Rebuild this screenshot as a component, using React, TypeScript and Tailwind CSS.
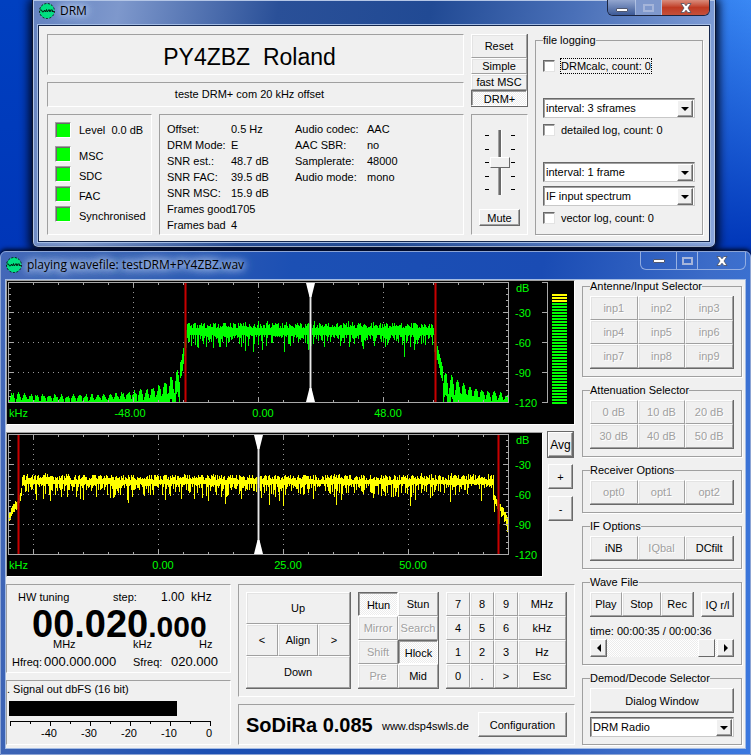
import type { ReactNode } from 'react';
import clsx from 'clsx';

const SUNKEN = 'border border-t-[#a0a0a0] border-l-[#a0a0a0] border-r-white border-b-white';
const RAISED =
  'border border-t-white border-l-white border-r-[#696969] border-b-[#696969] shadow-[inset_-1px_-1px_0_#a0a0a0]';
const CHECKER =
  'bg-[repeating-conic-gradient(#ffffff_0_25%,#ececec_0_50%)] bg-[length:2px_2px]';

type Column = [number, number, number];

function makeRandom(seed: number) {
  let s = seed;
  return () => {
    s = (s * 1664525 + 1013904223) % 4294967296;
    return s / 4294967296;
  };
}

function interpolate(points: number[][], x: number) {
  for (let i = 1; i < points.length; i++) {
    const [x0, y0] = points[i - 1];
    const [x1, y1] = points[i];
    if (x <= x1) return y0 + ((y1 - y0) * (x - x0)) / (x1 - x0);
  }
  return points[points.length - 1][1];
}

function bandColumn(x: number, rnd: () => number, solid: number): Column {
  const top = 47 - Math.floor(rnd() * 6) - (rnd() > 0.9 ? 2 : 0);
  let bottom = solid + Math.floor(rnd() * rnd() * 18);
  if (rnd() > 0.95) bottom += 5 + Math.floor(rnd() * 12);
  return [x, top, Math.min(bottom, 79)];
}

const LEFT_SKIRT = [[1, 10], [60, 8], [95, 9], [125, 12], [145, 16], [156, 20], [164, 27], [171, 35], [174, 42], [177, 60], [180, 78]];
const RIGHT_SKIRT = [[427, 68], [431, 52], [435, 36], [437, 32], [445, 28], [455, 21], [462, 17], [475, 14], [485, 12], [501, 9]];

function inputSpectrum(): Column[] {
  const rnd = makeRandom(7);
  const cols: Column[] = [];
  for (let x = 1; x < 501; x++) {
    if (x >= 180 && x < 427) {
      cols.push(bandColumn(x, rnd, 54));
      continue;
    }
    const left = x < 180;
    const h = interpolate(left ? LEFT_SKIRT : RIGHT_SKIRT, x);
    const steep = left ? x > 172 : x < 436;
    if (steep) {
      cols.push([x, 121 - Math.round(h), 121 - Math.round(h) + 13 + Math.floor(rnd() * 6)]);
      continue;
    }
    const lobe = Math.abs(Math.sin((Math.PI * (x - 2)) / 6.1));
    const height = Math.round(h * (0.25 + 0.75 * lobe) - 3 + rnd() * 3);
    if (height > 0) cols.push([x, 121 - height, Math.min(121, 121 - height + 22)]);
  }
  return cols;
}

function basebandSpectrum(): Column[] {
  const rnd = makeRandom(42);
  const cols: Column[] = [];
  for (let x = 1; x < 501; x++) {
    if (x < 15) {
      const y = Math.round(interpolate([[1, 82], [5, 72], [10, 65], [13, 58], [15, 46]], x) + rnd() * 3);
      cols.push([x, y, y + 8]);
    } else if (x > 486) {
      const y = Math.round(interpolate([[487, 61], [490, 66], [496, 75], [501, 84]], x) + rnd() * 2);
      cols.push([x, y, y + 6 + Math.floor(rnd() * rnd() * 18)]);
    } else {
      cols.push(bandColumn(x, rnd, 51));
    }
  }
  return cols;
}

const INPUT = inputSpectrum();
const BASEBAND = basebandSpectrum();

type SpectrumProps = {
  label: string;
  width: number;
  color: string;
  columns: Column[];
  grid: { x: number; text?: string }[];
  limits: number[];
  tuned: number;
  children?: ReactNode;
};

function Spectrum({ label, width, color, columns, grid, limits, tuned, children }: SpectrumProps) {
  const ticks = Array.from({ length: 19 }, (_, i) => 26 + i * 25);
  const sideTicks = Array.from({ length: 19 }, (_, i) => 7 + i * 6);
  const isMajor = (x: number) => grid.some((g) => g.x === x);
  return (
    <div className={clsx('min-w-0 flex-1 bg-black', SUNKEN)}>
      <svg
        role="img"
        aria-label={label}
        viewBox={`0 0 ${width} 143`}
        preserveAspectRatio="xMinYMin meet"
        className="block h-[143px] w-full font-['Liberation_Sans',sans-serif] text-[11px]"
        shapeRendering="crispEdges"
      >
        <g stroke="#989898" strokeDasharray="1 4">
          {[31, 61, 91].map((y) => (
            <path key={y} d={`M6 ${y}.5H500`} />
          ))}
          {grid.map((g) => (
            <path key={g.x} d={`M${g.x}.5 6V120`} />
          ))}
        </g>
        <path
          stroke={color}
          d={columns.map(([x, top, bottom]) => `M${x}.5 ${top}V${bottom}`).join('')}
        />
        <g stroke="#a8a8a8" fill="none">
          <rect x="1.5" y="1.5" width="500" height="120" />
          {ticks.map((x) => (
            <path key={x} d={isMajor(x) ? `M${x}.5 1V6M${x}.5 121V116` : `M${x}.5 1V4M${x}.5 121V119`} />
          ))}
          {sideTicks.map((y) => (
            <path key={y} d={(y - 1) % 30 === 0 ? `M1 ${y}.5H7M501 ${y}.5H496` : `M1 ${y}.5H4M501 ${y}.5H499`} />
          ))}
        </g>
        {limits.map((x) => (
          <g key={x} fillOpacity="0.8">
            <rect x={x - 1} y="2" width="3" height="119" fill="#800000" />
            <rect x={x} y="2" width="1" height="119" fill="#e00000" />
          </g>
        ))}
        <rect x={tuned - 1} y="2" width="3" height="119" fill="#808080" fillOpacity="0.8" />
        <rect x={tuned} y="2" width="1" height="119" fill="#e8e8e8" />
        <path
          fill="#ffffff"
          shapeRendering="geometricPrecision"
          d={`M${tuned - 4} 2h9l-3.500 14h-2zM${tuned - 4} 121h9l-3.500 -14h-2z`}
        />
        <g fill="#00ff00">
          <text x="2" y="136">kHz</text>
          {grid.map((g) => g.text && (
            <text key={g.x} x={g.x + (g.text.startsWith('-') ? -3 : 5)} y="136" textAnchor="middle">{g.text}</text>
          ))}
          <text x="509" y="11">dB</text>
          {['-30', '-60', '-90', '-120'].map((t, i) => (
            <text key={t} x="508" y={36 + i * 30}>{t}</text>
          ))}
        </g>
        {children}
      </svg>
    </div>
  );
}

function LevelMeter() {
  return (
    <g>
      <path stroke="#a8a8a8" fill="none" d="M535 1.5H540.5V121.5H535M535 31.5H540M535 61.5H540M535 91.5H540" />
      {Array.from({ length: 37 }, (_, i) => (
        <rect key={i} x="545" y={13 + i * 3} width="15" height="2" fill={i < 3 ? '#ffff00' : '#00ff00'} />
      ))}
    </g>
  );
}

function AppIcon() {
  return (
    <svg viewBox="0 0 16 16" className="size-4 shrink-0" aria-hidden="true">
      <circle cx="8" cy="8" r="7.5" fill="#00e080" />
      <circle cx="8" cy="8" r="7.5" fill="none" stroke="#04180f" strokeDasharray="2 1.6" />
      <path d="M1 7h1.5l1 2 1.5-.5.5-1.500 1 2 1-2.500.8 2.500L10 6.500l1 2.500.5-2h2l-.5 1.500h2" fill="none" stroke="#04180f" />
    </svg>
  );
}

function CaptionButtons({ active }: { active?: boolean }) {
  const cell = 'grid place-items-center border-r border-[#c3d3f0]/70';
  return (
    <div
      className={clsx(
        'flex overflow-hidden rounded-b-md border border-t-0',
        active ? 'h-4 border-[#1b2540]' : 'h-[18px] border-[#a9bfe8]/80',
      )}
    >
      <button aria-label="Minimize" className={clsx(cell, active ? 'w-7 bg-linear-to-b from-[#93a6cf] to-[#3d5a97]' : 'w-9')}>
        <span className={clsx('h-1 w-3 rounded-[1px] border border-[#505870] bg-white', active ? 'mt-1' : '')} />
      </button>
      <button aria-label="Maximize" disabled className={clsx(cell, active ? 'w-[26px] bg-[#7f98cc]' : 'w-[21px]')}>
        <span className="h-2 w-[11px] border-2 border-[#a5b5da]" />
      </button>
      <button
        aria-label="Close"
        className={clsx('grid w-[47px] place-items-center', active && 'bg-linear-to-b from-[#d98c7c] via-[#bf3a22] to-[#c4503a]')}
      >
        <svg viewBox="0 0 12 10" className="h-[10px] w-3" aria-hidden="true">
          <path d="M1 .5h3.200L6 2.800 7.800.5H11L8 5l3 4.500H7.800L6 7.200 4.200 9.500H1L4 5z" fill="#fff" stroke="#4a4f60" strokeWidth=".8" />
        </svg>
      </button>
    </div>
  );
}

function Title({ children }: { children: ReactNode }) {
  return (
    <h1 className="flex items-center gap-[5px] font-['Open_Sans','Noto_Sans',sans-serif] text-[12px] text-black">
      <AppIcon />
      <span className="[text-shadow:0_0_6px_#c8d8f4,0_0_8px_#b8ccf0,0_0_12px_#a8c0e8,0_0_14px_#a8c0e8]">{children}</span>
    </h1>
  );
}

type ButtonProps = { children: ReactNode; className?: string; disabled?: boolean; pressed?: boolean; label?: string };

// Flat cell used inside a ButtonGroup
function Key({ children, className, disabled, pressed, label }: ButtonProps) {
  return (
    <button
      disabled={disabled}
      aria-pressed={pressed}
      aria-label={label}
      className={clsx(
        'min-w-0 whitespace-nowrap border leading-3',
        pressed
          ? ['border-t-[#696969] border-l-[#696969] border-r-white border-b-white pt-px pl-px shadow-[inset_1px_1px_0_#a0a0a0]', CHECKER]
          : 'border-t-white border-l-white border-r-[#a0a0a0] border-b-[#a0a0a0] shadow-[inset_1px_1px_0_#e3e3e3]',
        disabled && 'text-[#a0a0a0] [text-shadow:1px_1px_0_#ffffff]',
        className,
      )}
    >
      {children}
    </button>
  );
}

function ButtonGroup({ children, className }: { children: ReactNode; className?: string }) {
  return <div className={clsx('grid border-r border-b border-[#696969]', className)}>{children}</div>;
}

function PushButton({ children, className }: ButtonProps) {
  return <button className={clsx('whitespace-nowrap leading-3', RAISED, className)}>{children}</button>;
}

function Group({ title, children, className }: { title: string; children: ReactNode; className?: string }) {
  return (
    <fieldset
      className={clsx(
        'min-w-0 border border-[#a0a0a0] px-[7px] shadow-[1px_1px_0_#ffffff]',
        className,
      )}
    >
      <legend className="bg-[#f0f0f0] leading-3">{title}</legend>
      {children}
    </fieldset>
  );
}

function Dropdown({ label, value, className }: { label: string; value: string; className?: string }) {
  return (
    <div className={clsx('relative h-5', className)}>
      <select
        aria-label={label}
        className="size-full appearance-none border border-t-[#696969] border-l-[#696969] border-r-[#c8c8c8] border-b-[#c8c8c8] bg-white pl-[2px] shadow-[inset_1px_1px_0_#a0a0a0]"
      >
        <option>{value}</option>
      </select>
      <span className={clsx('pointer-events-none absolute top-[2px] right-[2px] bottom-[1px] grid w-4 place-items-center bg-[#f0f0f0]', RAISED)}>
        <span className="border-x-4 border-t-4 border-x-transparent border-t-black" />
      </span>
    </div>
  );
}

function LogCheck({ label, focused, className }: { label: string; focused?: boolean; className?: string }) {
  return (
    <label className={clsx('flex h-4 items-center gap-[5px]', className)}>
      <input
        type="checkbox"
        className="size-3 appearance-none border border-t-[#696969] border-l-[#696969] border-r-[#e3e3e3] border-b-[#e3e3e3] bg-white shadow-[inset_1px_1px_0_#a0a0a0] checked:bg-black"
      />
      <span className={clsx('border leading-[14px]', focused ? 'border-dotted border-black' : 'border-transparent')}>{label}</span>
    </label>
  );
}

const LEDS = ['MSC', 'SDC', 'FAC', 'Synchronised'];

const STATS = [
  ['Offset:', '0.5 Hz', 'Audio codec:', 'AAC'],
  ['DRM Mode:', 'E', 'AAC SBR:', 'no'],
  ['SNR est.:', '48.7 dB', 'Samplerate:', '48000'],
  ['SNR FAC:', '39.5 dB', 'Audio mode:', 'mono'],
  ['SNR MSC:', '15.9 dB'],
  ['Frames good', '1705'],
  ['Frames bad', '4'],
];

function Led() {
  return (
    <span className="size-4 border border-t-[#a0a0a0] border-l-[#a0a0a0] border-r-white border-b-white bg-[#00ff00] shadow-[inset_1px_1px_0_#696969]" />
  );
}

function TickColumn() {
  return (
    <div className="flex h-[55px] flex-col justify-between">
      {[0, 1, 2, 3, 4].map((i) => (
        <span key={i} className="h-px w-1 bg-black" />
      ))}
    </div>
  );
}

function DrmWindow() {
  return (
    <section className="mr-[35px] ml-8 rounded-b-md border border-t-0 border-[#0a1430] bg-[linear-gradient(100deg,#6482c0_0%,#7e98cc_12%,#2a5098_34%,#214a94_55%,#4a70b8_75%,#8aa6dc_100%)] px-[5px] pb-[5px] shadow-[inset_0_0_0_1px_#b4c6e6,0_2px_10px_3px_#000820]">
      <header className="flex h-[25px] items-start justify-between">
        <div className="pt-[2px] pl-px">
          <Title>DRM</Title>
        </div>
        <CaptionButtons active />
      </header>
      <div className="flex gap-[7px] border border-[#14264c] bg-[#f0f0f0] pt-2 pr-[6px] pb-[6px] pl-2 shadow-[0_0_0_1px_#a4bce4]">
        <div className="flex min-w-0 flex-1 flex-col gap-[7px]">
          <div className={clsx('grid h-[41px] place-items-center pt-1 pr-3 text-[23px] leading-8 whitespace-pre', SUNKEN)}>PY4ZBZ  Roland</div>
          <div className={clsx('grid h-[25px] place-items-center pr-3', SUNKEN)}>teste DRM+ com 20 kHz offset</div>
          <div className="flex flex-1 gap-[7px]">
            <div className={clsx('w-[105px] pt-[7px] pl-[7px]', SUNKEN)}>
              <div className="mb-2 flex h-4 items-center gap-2 whitespace-pre">
                <Led />
                Level  0.0 dB
              </div>
              <ul className="flex flex-col gap-1">
                {LEDS.map((name) => (
                  <li key={name} className="flex h-4 items-center gap-2">
                    <Led />
                    <span className="pt-[5px]">{name}</span>
                  </li>
                ))}
              </ul>
            </div>
            <div className={clsx('flex-1 pt-[6px] pl-[7px]', SUNKEN)}>
              <table className="w-full table-fixed text-left leading-4">
                <tbody>
                  {STATS.map(([name, value, audioName, audioValue]) => (
                    <tr key={name}>
                      <th className="w-16 font-normal whitespace-nowrap">{name}</th>
                      <td className="w-16">{value}</td>
                      <th className="w-[72px] font-normal">{audioName}</th>
                      <td>{audioValue}</td>
                    </tr>
                  ))}
                </tbody>
              </table>
            </div>
          </div>
        </div>

        <div className="flex w-[57px] flex-col gap-[7px]">
          <ButtonGroup className="h-[73px] grid-rows-[24px_16px_16px_16px]">
            <Key>Reset</Key>
            <Key>Simple</Key>
            <Key>fast MSC</Key>
            <Key pressed>DRM+</Key>
          </ButtonGroup>
          <div className={clsx('flex flex-1 flex-col items-center justify-between pt-[15px] pb-2', SUNKEN)}>
            <div className="flex items-center">
              <TickColumn />
              <input
                type="range"
                aria-label="Volume"
                defaultValue={50}
                className="h-[65px] w-[22px] appearance-none bg-[linear-gradient(90deg,transparent_9px,#a0a0a0_9px_10px,#696969_10px_12px,#ffffff_12px_13px,transparent_13px)] [direction:rtl] [writing-mode:vertical-lr] [&::-webkit-slider-thumb]:h-[11px] [&::-webkit-slider-thumb]:w-[20px] [&::-webkit-slider-thumb]:appearance-none [&::-webkit-slider-thumb]:border [&::-webkit-slider-thumb]:border-t-white [&::-webkit-slider-thumb]:border-r-[#696969] [&::-webkit-slider-thumb]:border-b-[#696969] [&::-webkit-slider-thumb]:border-l-white [&::-webkit-slider-thumb]:bg-[#f0f0f0]"
              />
              <TickColumn />
            </div>
            <PushButton className="h-[17px] w-[41px]">Mute</PushButton>
          </div>
        </div>

        <Group title="file logging" className="w-[168px] pb-2">
          <LogCheck label="DRMcalc, count: 0" focused className="mt-3" />
          <Dropdown label="DRMcalc interval" value="interval: 3 sframes" className="mt-6" />
          <LogCheck label="detailed log, count: 0" className="mt-1" />
          <Dropdown label="Detailed log interval" value="interval: 1 frame" className="mt-6" />
          <Dropdown label="Vector log source" value="IF input spectrum" className="mt-1" />
          <LogCheck label="vector log, count: 0" className="mt-1" />
        </Group>
      </div>
    </section>
  );
}

function Tuning() {
  return (
    <div className={clsx('h-[89px] pt-[6px] pl-[5px]', SUNKEN)}>
      <div className="flex items-center leading-3">
        <span className="w-[101px] pl-[6px]">HW tuning</span>
        <span className="w-12">step:</span>
        <span className="text-[12px] whitespace-pre">1.00  kHz</span>
      </div>
      <div className="mt-[9px] h-6 pl-5 text-[38px] leading-6 font-bold whitespace-nowrap">
        00.020<span className="text-[30px] leading-0">.000</span>
      </div>
      <div className="flex pt-[2px] leading-3">
        <span className="w-20 pl-[41px]">MHz</span>
        <span className="w-[66px] pl-[41px]">kHz</span>
        <span className="pl-[41px]">Hz</span>
      </div>
      <div className="flex items-center pt-1 leading-4">
        <span className="w-8">Hfreq:</span>
        <span className="w-[89px] text-[13px]">000.000.000</span>
        <span className="w-[38px]">Sfreq:</span>
        <span className="text-[13px]">020.000</span>
      </div>
    </div>
  );
}

function SignalOut() {
  return (
    <div className={clsx('h-[65px]', SUNKEN)}>
      <div className="pt-[2px] leading-3">. Signal out dbFS (16 bit)</div>
      <svg viewBox="0 0 223 49" preserveAspectRatio="xMinYMin meet" className="block h-[49px] w-full text-[11px]" shapeRendering="crispEdges">
        <rect x="2" y="6" width="168" height="15" fill="#000" />
        <path
          stroke="#000"
          fill="none"
          d="M3 26.500H204M3.500 26V31M23.500 26V29M43.500 26V31M63.500 26V29M83.500 26V31M103.500 26V29M123.500 26V31M143.500 26V29M163.500 26V31M183.500 26V29M203.500 26V31"
        />
        {['-40', '-30', '-20', '-10', '0'].map((t, i) => (
          <text key={t} x={42 + i * 40} y="42" textAnchor="middle">{t}</text>
        ))}
      </svg>
    </div>
  );
}

function Controls() {
  return (
    <div className={clsx('grid h-[113px] grid-cols-[105fr_81fr_121fr] gap-[7px] p-[7px]', SUNKEN)}>
      <ButtonGroup className="grid-cols-[4fr_5fr_4fr] grid-rows-3">
        <Key className="col-span-3">Up</Key>
        <Key label="Step down">&lt;</Key>
        <Key>Align</Key>
        <Key label="Step up">&gt;</Key>
        <Key className="col-span-3">Down</Key>
      </ButtonGroup>
      <ButtonGroup className="grid-cols-2 grid-rows-4">
        <Key pressed>Htun</Key>
        <Key>Stun</Key>
        <Key disabled>Mirror</Key>
        <Key disabled>Search</Key>
        <Key disabled>Shift</Key>
        <Key pressed>Hlock</Key>
        <Key disabled>Pre</Key>
        <Key>Mid</Key>
      </ButtonGroup>
      <ButtonGroup className="grid-cols-[1fr_1fr_1fr_2fr] grid-rows-4">
        {['7', '8', '9', 'MHz', '4', '5', '6', 'kHz', '1', '2', '3', 'Hz', '0', '.', '>', 'Esc'].map((k) => (
          <Key key={k}>{k}</Key>
        ))}
      </ButtonGroup>
    </div>
  );
}

function Sidebar() {
  return (
    <aside className="flex w-40 flex-col gap-[7px]">
      <Group title="Antenne/Input Selector" className="pb-[7px]">
        <ButtonGroup className="mt-1 h-[73px] grid-cols-3 grid-rows-3">
          {[1, 2, 3, 4, 5, 6, 7, 8, 9].map((n) => (
            <Key key={n} disabled>{`inp${n}`}</Key>
          ))}
        </ButtonGroup>
      </Group>
      <Group title="Attenuation Selector" className="pb-[7px]">
        <ButtonGroup className="mt-1 h-[49px] grid-cols-3 grid-rows-2">
          {[0, 10, 20, 30, 40, 50].map((n) => (
            <Key key={n} disabled>{`${n} dB`}</Key>
          ))}
        </ButtonGroup>
      </Group>
      <Group title="Receiver Options" className="pb-[7px]">
        <ButtonGroup className="mt-1 h-[25px] grid-cols-3">
          <Key disabled>opt0</Key>
          <Key disabled>opt1</Key>
          <Key disabled>opt2</Key>
        </ButtonGroup>
      </Group>
      <Group title="IF Options" className="pb-[7px]">
        <ButtonGroup className="mt-1 h-[25px] grid-cols-3">
          <Key>iNB</Key>
          <Key disabled>IQbal</Key>
          <Key>DCfilt</Key>
        </ButtonGroup>
      </Group>
      <Group title="Wave File" className="pb-[7px]">
        <div className="mt-1 flex h-[25px] gap-[7px]">
          <ButtonGroup className="flex-1 grid-cols-[4fr_5fr_4fr]">
            <Key>Play</Key>
            <Key>Stop</Key>
            <Key>Rec</Key>
          </ButtonGroup>
          <PushButton className="w-[33px]">IQ r/l</PushButton>
        </div>
        <div className="pt-2 pb-[2px] leading-3">time: 00:00:35 / 00:00:36</div>
        <div className="flex h-[18px]">
          <button aria-label="Back" className={clsx('grid w-[17px] place-items-center', RAISED)}>
            <span className="border-y-4 border-r-4 border-y-transparent border-r-black" />
          </button>
          <input
            type="range"
            aria-label="Playback position"
            defaultValue={98}
            className={clsx(
              'h-full min-w-0 flex-1 appearance-none [&::-webkit-slider-thumb]:h-[18px] [&::-webkit-slider-thumb]:w-[17px] [&::-webkit-slider-thumb]:appearance-none [&::-webkit-slider-thumb]:border [&::-webkit-slider-thumb]:border-t-white [&::-webkit-slider-thumb]:border-r-[#696969] [&::-webkit-slider-thumb]:border-b-[#696969] [&::-webkit-slider-thumb]:border-l-white [&::-webkit-slider-thumb]:bg-[#f0f0f0]',
              CHECKER,
            )}
          />
          <button aria-label="Forward" className={clsx('grid w-[17px] place-items-center', RAISED)}>
            <span className="border-y-4 border-l-4 border-y-transparent border-l-black" />
          </button>
        </div>
      </Group>
      <Group title="Demod/Decode Selector" className="pb-[7px]">
        <PushButton className="mt-1 h-[25px] w-full">Dialog Window</PushButton>
        <Dropdown label="Demodulator" value="DRM Radio" className="mt-1" />
      </Group>
    </aside>
  );
}

function ReceiverWindow() {
  return (
    <section className="mt-[3px] rounded-t-md border border-[#8ca4d4] bg-[linear-gradient(100deg,#4468b8_0%,#3a62b4_14%,#1c50b4_35%,#1a4cb4_65%,#3c6cc8_85%,#3a78e0_100%)] px-1 pb-[5px] shadow-[0_-1px_4px_1px_#000820]">
      <header className="flex h-[27px] items-start justify-between">
        <div className="pt-1 pl-px">
          <Title>playing wavefile: testDRM+PY4ZBZ.wav</Title>
        </div>
        <CaptionButtons />
      </header>
      <div className="flex gap-[7px] border border-[#a4bce4] bg-[#f0f0f0] pr-[3px] pb-[3px]">
        <main className="flex min-w-0 flex-1 flex-col gap-[7px]">
          <div className="flex">
            <Spectrum
              label="Input spectrum"
              width={567}
              color="#00ff00"
              columns={INPUT}
              grid={[{ x: 126, text: '-48.00' }, { x: 251, text: '0.00' }, { x: 376, text: '48.00' }]}
              limits={[178, 428]}
              tuned={303}
            >
              <LevelMeter />
            </Spectrum>
          </div>
          <div className="flex gap-[5px] pr-[2px]">
            <Spectrum
              label="Baseband spectrum"
              width={535}
              color="#ffff00"
              columns={BASEBAND}
              grid={[{ x: 26 }, { x: 151, text: '0.00' }, { x: 276, text: '25.00' }, { x: 401, text: '50.00' }]}
              limits={[11, 491]}
              tuned={251}
            />
            <div className="flex w-[25px] flex-col gap-[7px]">
              <PushButton className="h-[25px] text-[12px] outline outline-[#696969]">Avg</PushButton>
              <PushButton className="h-[25px]">+</PushButton>
              <PushButton className="h-[25px]">-</PushButton>
            </div>
          </div>
          <div className="flex gap-[7px]">
            <div className="flex w-[225px] flex-col gap-[7px]">
              <Tuning />
              <SignalOut />
            </div>
            <div className="flex min-w-0 flex-1 flex-col gap-[7px]">
              <Controls />
              <div className={clsx('flex h-[41px] items-center justify-between px-[7px]', SUNKEN)}>
                <strong className="text-xl">SoDiRa 0.085</strong>
                <a href="#site" className="pt-1">www.dsp4swls.de</a>
                <PushButton className="h-[25px] w-[89px]">Configuration</PushButton>
              </div>
            </div>
          </div>
        </main>
        <Sidebar />
      </div>
    </section>
  );
}

export default function App() {
  return (
    <div className="min-h-screen overflow-hidden bg-[linear-gradient(180deg,#0044c4_0%,#0038b4_30%,#003cb8_100%)] font-['Liberation_Sans',Arial,sans-serif] text-[11px] text-black">
      <div className="bg-[linear-gradient(180deg,transparent,#0036b8_33%),linear-gradient(90deg,#0040c0_60%,#3a88f4_100%)]">
        <DrmWindow />
        <ReceiverWindow />
      </div>
    </div>
  );
}
